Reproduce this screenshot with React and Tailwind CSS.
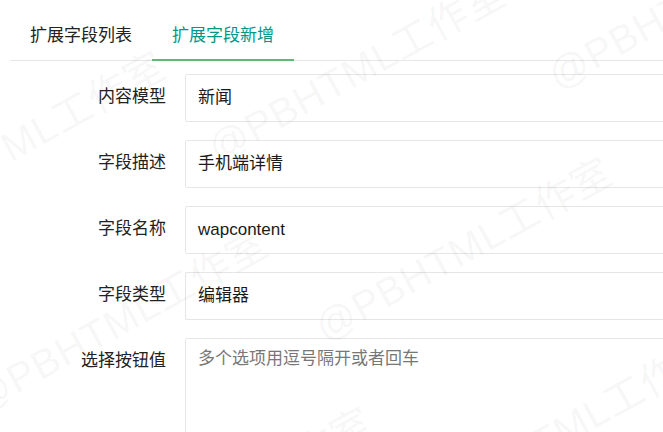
const font = {
  fontFamily:
    '"Liberation Sans", "Noto Sans CJK SC", Arial, sans-serif',
};

const Row = ({ label, value, placeholder, textarea }) => {
  return (
    <div className="flex items-start mb-[18px]">
      <label className="w-[185px] shrink-0 pr-[19px] pt-[11px] text-right text-[17px] leading-[24px] text-[#222]">
        {label}
      </label>
      {textarea ? (
        <div className="w-[540px] h-[120px] shrink-0 border border-[#e6e6e6] rounded-[2px] bg-white pl-[12px] pt-[8px] text-[17px] leading-[24px] text-[#777]">
          {placeholder}
        </div>
      ) : (
        <div className="w-[540px] h-[48px] shrink-0 flex items-center border border-[#e6e6e6] rounded-[2px] bg-white pl-[12px] text-[17px] text-[#1a1a1a]">
          {value}
        </div>
      )}
    </div>
  );
};

// tiled watermark over the whole page, each copy turned around its left edge
const Watermark = () => {
  const cls =
    "absolute whitespace-nowrap text-[40px] leading-none tracking-[1px] text-black/[0.05] origin-left -rotate-[29deg]";
  return (
    <div className="absolute inset-0 overflow-hidden pointer-events-none">
      <span className={`${cls} left-[-129px] top-[204px]`}>@PBHTML工作室</span>
      <span className={`${cls} left-[211px] top-[131px]`}>@PBHTML工作室</span>
      <span className={`${cls} left-[551px] top-[58px]`}>@PBHTML工作室</span>
      <span className={`${cls} left-[-27px] top-[382px]`}>@PBHTML工作室</span>
      <span className={`${cls} left-[318px] top-[310px]`}>@PBHTML工作室</span>
      <span className={`${cls} left-[78px] top-[560px]`}>@PBHTML工作室</span>
      <span className={`${cls} left-[423px] top-[488px]`}>@PBHTML工作室</span>
    </div>
  );
};

export default function App() {
  return (
    <div style={font} className="relative w-[663px] h-[432px] overflow-hidden bg-white">
      {/* tabs */}
      <ul className="flex h-[49px] mt-[12px] ml-[10px] border-b border-[#e6e6e6] text-[17px]">
        <li className="flex items-center px-5 text-[#222]">扩展字段列表</li>
        <li className="flex items-center px-5 pt-[1px] text-[#009688] border-b-2 border-[#5FB878] -mb-px">
          扩展字段新增
        </li>
      </ul>

      <div className="mt-[13px]">
        <Row label="内容模型" value="新闻" />
        <Row label="字段描述" value="手机端详情" />
        <Row label="字段名称" value="wapcontent" />
        <Row label="字段类型" value="编辑器" />
        <Row
          label="选择按钮值"
          textarea
          placeholder="多个选项用逗号隔开或者回车"
        />
      </div>

      <Watermark />
    </div>
  );
}
